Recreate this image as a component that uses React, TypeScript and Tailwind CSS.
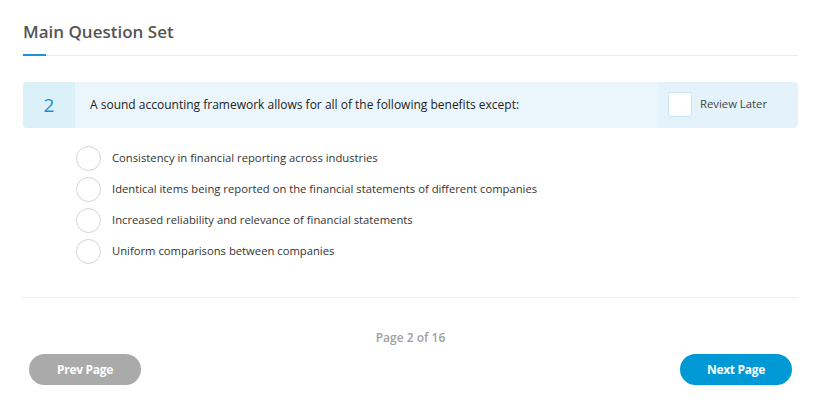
import { useState } from "react";

const options = [
  "Consistency in financial reporting across industries",
  "Identical items being reported on the financial statements of different companies",
  "Increased reliability and relevance of financial statements",
  "Uniform comparisons between companies",
];

export default function App() {
  const [selected, setSelected] = useState<number | null>(null);
  const [review, setReview] = useState(false);

  return (
    <div
      className="w-[821px] h-[408px] bg-white px-[23px] pt-[20px] text-[#333]"
      style={{ fontFamily: '"Open Sans", "Liberation Sans", sans-serif' }}
    >
      {/* Header */}
      <h1 className="text-[17px] leading-[24px] font-semibold text-[#555]">Main Question Set</h1>
      <div className="relative mt-[10px] h-[2px] border-b border-[#ebebeb]">
        <div className="absolute left-0 bottom-[-1px] h-[2px] w-[23px] bg-[#1a96d4]" />
      </div>

      {/* Question bar */}
      <div className="mt-[26px] flex h-[46px] rounded-[4px] overflow-hidden bg-[#ebf6fc]">
        <div className="flex w-[52px] items-center justify-center bg-[#dcf0fa] text-[19px] text-[#1e90d0]">
          2
        </div>
        <div className="flex flex-1 items-center pl-[15px] text-[12px] text-[#222]">
          A sound accounting framework allows for all of the following benefits except:
        </div>
        <div className="flex w-[140px] items-center bg-[#e3f2fb] pl-[10px] pb-[2px]">
          <button
            onClick={() => setReview(!review)}
            className={
              "h-[25px] w-[24px] rounded-[3px] border border-[#cde6f5] " + (review ? "bg-[#1a96d4]" : "bg-white")
            }
          />
          <span className="ml-[8px] text-[11.3px] text-[#444]">Review Later</span>
        </div>
      </div>

      {/* Options */}
      <div className="mt-[18px] flex flex-col gap-[6px] pl-[53px]">
        {options.map((o, i) => (
          <label key={i} className="flex h-[25px] items-center cursor-pointer" onClick={() => setSelected(i)}>
            <span
              className={
                "h-[25px] w-[25px] rounded-full border " +
                (selected === i ? "border-[#1a96d4] bg-[#1a96d4]" : "border-[#d4d4d4] bg-white")
              }
            />
            <span className="ml-[11px] text-[11.25px] text-[#333]">{o}</span>
          </label>
        ))}
      </div>

      <div className="mt-[33px] border-b border-[#ebebeb]" />

      {/* Pagination */}
      <div className="mt-[31px] text-center text-[12px] font-semibold text-[#a0a0a0]">Page 2 of 16</div>
      <div className="mt-[7px] flex justify-between px-[6px]">
        <button className="h-[31px] w-[112px] rounded-full bg-[#aaaaaa] text-[12px] font-bold tracking-[-0.3px] text-white">
          Prev Page
        </button>
        <button className="h-[31px] w-[112px] rounded-full bg-[#0099d6] text-[12px] font-bold tracking-[-0.3px] text-white">
          Next Page
        </button>
      </div>
    </div>
  );
}
